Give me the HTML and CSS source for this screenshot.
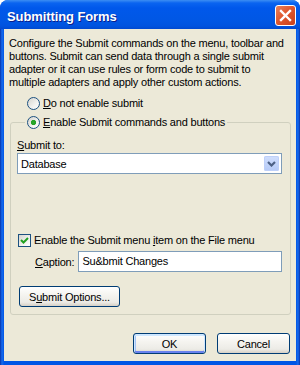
FILE: index.html
```html
<!DOCTYPE html>
<html lang="en">
<head>
    <meta charset="UTF-8">
    <title>Submitting Forms</title>
    <link rel="stylesheet" href="styles.css">
</head>
<body>
    <div class="window">
        <div class="titlebar">
            <span class="title">Submitting Forms</span>
            <span class="close">
                <svg width="13" height="13" viewBox="0 0 13 13"><path d="M2 2 L11 11 M11 2 L2 11" stroke="#fff" stroke-width="2.4" stroke-linecap="square"/></svg>
            </span>
        </div>
        <div class="client">
            <p class="intro">Configure the Submit commands on the menu, toolbar and buttons. Submit can send data through a single submit adapter or it can use rules or form code to submit to multiple adapters and apply other custom actions.</p>

            <label class="option first">
                <span class="radio"></span>
                <span><u>D</u>o not enable submit</span>
            </label>

            <fieldset class="group">
                <legend>
                    <label class="option">
                        <span class="radio checked"></span>
                        <span><u>E</u>nable Submit commands and buttons</span>
                    </label>
                </legend>

                <div class="field-label"><u>S</u>ubmit to:</div>
                <div class="combo">
                    <span class="combo-text">Database</span>
                    <span class="combo-btn">
                        <svg width="9" height="6" viewBox="0 0 9 6"><path d="M1 1 L4.5 4.5 L8 1" fill="none" stroke="#4D6185" stroke-width="2.2"/></svg>
                    </span>
                </div>

                <label class="option check-row">
                    <span class="checkbox">
                        <svg width="11" height="11" viewBox="0 0 11 11"><path d="M2 5 L4.5 7.5 L9 3" fill="none" stroke="#21A121" stroke-width="2"/></svg>
                    </span>
                    <span>Enable the Submit menu <u>i</u>tem on the File menu</span>
                </label>

                <div class="caption-row">
                    <span class="caption-label"><u>C</u>aption:</span>
                    <div class="textbox">Su&amp;bmit Changes</div>
                </div>

                <button class="btn options-btn">S<u>u</u>bmit Options...</button>
            </fieldset>

            <div class="actions">
                <button class="btn default">OK</button>
                <button class="btn">Cancel</button>
            </div>
        </div>
    </div>
</body>
</html>
```

FILE: styles.css
```css
body {
    margin: 0;
    background: #fff;
    font-family: "Liberation Sans", Arial, sans-serif;
    font-size: 11px;
    letter-spacing: -0.2px;
    color: #000;
}
.window {
    width: 300px;
    height: 365px;
    display: flex;
    flex-direction: column;
    background: linear-gradient(to right, #0831A8 0, #166BEE 2px, #0055E5 4px, #0055E5 296px, #166BEE 298px, #0831A8 300px);
    border-radius: 8px 8px 0 0;
    overflow: hidden;
}
.titlebar {
    height: 29px;
    display: flex;
    justify-content: space-between;
    align-items: center;
    padding: 0 4px 0 7px;
    background: linear-gradient(#3C8EF3 0, #0A64F0 3px, #0058EB 8px, #0057E5 20px, #0053DF 26px, #0049D0 29px);
}
.title {
    color: #fff;
    font-weight: bold;
    font-size: 13px;
    letter-spacing: -0.1px;
    padding-top: 3px;
    text-shadow: 1px 1px 0 #0A1E8C;
}
.close {
    width: 19px;
    height: 19px;
    margin-top: 2px;
    display: flex;
    align-items: center;
    justify-content: center;
    border: 1px solid #fff;
    border-radius: 3px;
    background: linear-gradient(135deg, #E8825C 0, #E0582F 45%, #C8401C 100%);
}
.client {
    flex: 1;
    margin: 0 4px 4px;
    padding: 8px 5px 7px 5px;
    background: #ECE9D8;
    display: flex;
    flex-direction: column;
}
.intro {
    margin: 0;
    padding-right: 5px;
    line-height: 13px;
}
u {
    text-decoration: underline;
    text-underline-offset: 1px;
}
.option {
    display: flex;
    align-items: center;
    gap: 3px;
    height: 13px;
    line-height: 13px;
}
.option.first {
    margin: 8px 0 0 18px;
}
.radio {
    width: 11px;
    height: 11px;
    border: 1px solid #1C5180;
    border-radius: 50%;
    background: linear-gradient(135deg, #D5D4CE 0, #F2F2EF 60%, #FFFFFF 100%);
}
.radio.checked {
    background: radial-gradient(circle, #2FAA2F 0, #21A121 2.2px, transparent 3px), linear-gradient(135deg, #D5D4CE 0, #F2F2EF 60%, #FFFFFF 100%);
}
.group {
    margin: 6px 0 0 1px;
    padding: 0 8px 7px 6px;
    border: 1px solid #D0D0BF;
    border-radius: 3px;
}
.group legend {
    margin-left: 8px;
    padding: 0 2px;
}
.field-label {
    margin-top: 10px;
    line-height: 13px;
}
.combo {
    margin-top: 1px;
    height: 19px;
    display: flex;
    align-items: center;
    justify-content: space-between;
    border: 1px solid #7F9DB9;
    background: #fff;
    padding: 0 2px 0 3px;
}
.combo-btn {
    width: 15px;
    height: 15px;
    display: flex;
    align-items: center;
    justify-content: center;
    border-radius: 2px;
    background: linear-gradient(#D1DFFD, #B5CAF7);
    box-shadow: inset 0 0 0 1px #BED0F9;
}
.check-row {
    margin-top: 60px;
    margin-left: 1px;
}
.checkbox {
    width: 11px;
    height: 11px;
    display: flex;
    border: 1px solid #1C5180;
    background: linear-gradient(135deg, #D5D4CE 0, #F2F2EF 60%, #FFFFFF 100%);
}
.caption-row {
    margin-top: 4px;
    margin-left: 18px;
    display: flex;
    align-items: center;
    gap: 4px;
}
.textbox {
    flex: 1;
    height: 19px;
    line-height: 19px;
    padding-left: 3px;
    border: 1px solid #7F9DB9;
    background: #fff;
}
.btn {
    font-family: "Liberation Sans", Arial, sans-serif;
    font-size: 11px;
    letter-spacing: -0.2px;
    color: #000;
    height: 21px;
    padding: 0;
    border: 1px solid #003C74;
    border-radius: 3px;
    background: linear-gradient(#FFFFFF 0, #F5F4F0 40%, #ECEBE6 80%, #D6D0C5 100%);
}
.options-btn {
    margin-top: 14px;
    margin-left: 2px;
    width: 101px;
}
.actions {
    margin-top: auto;
    display: flex;
    justify-content: flex-end;
    gap: 11px;
    padding-right: 1px;
}
.actions .btn {
    width: 73px;
}
.btn.default {
    box-shadow: inset 0 1px 0 1px #CEE7FF, inset 0 -1px 0 1px #6982EE, inset 1px 0 0 1px #A6C4F4;
}
```
